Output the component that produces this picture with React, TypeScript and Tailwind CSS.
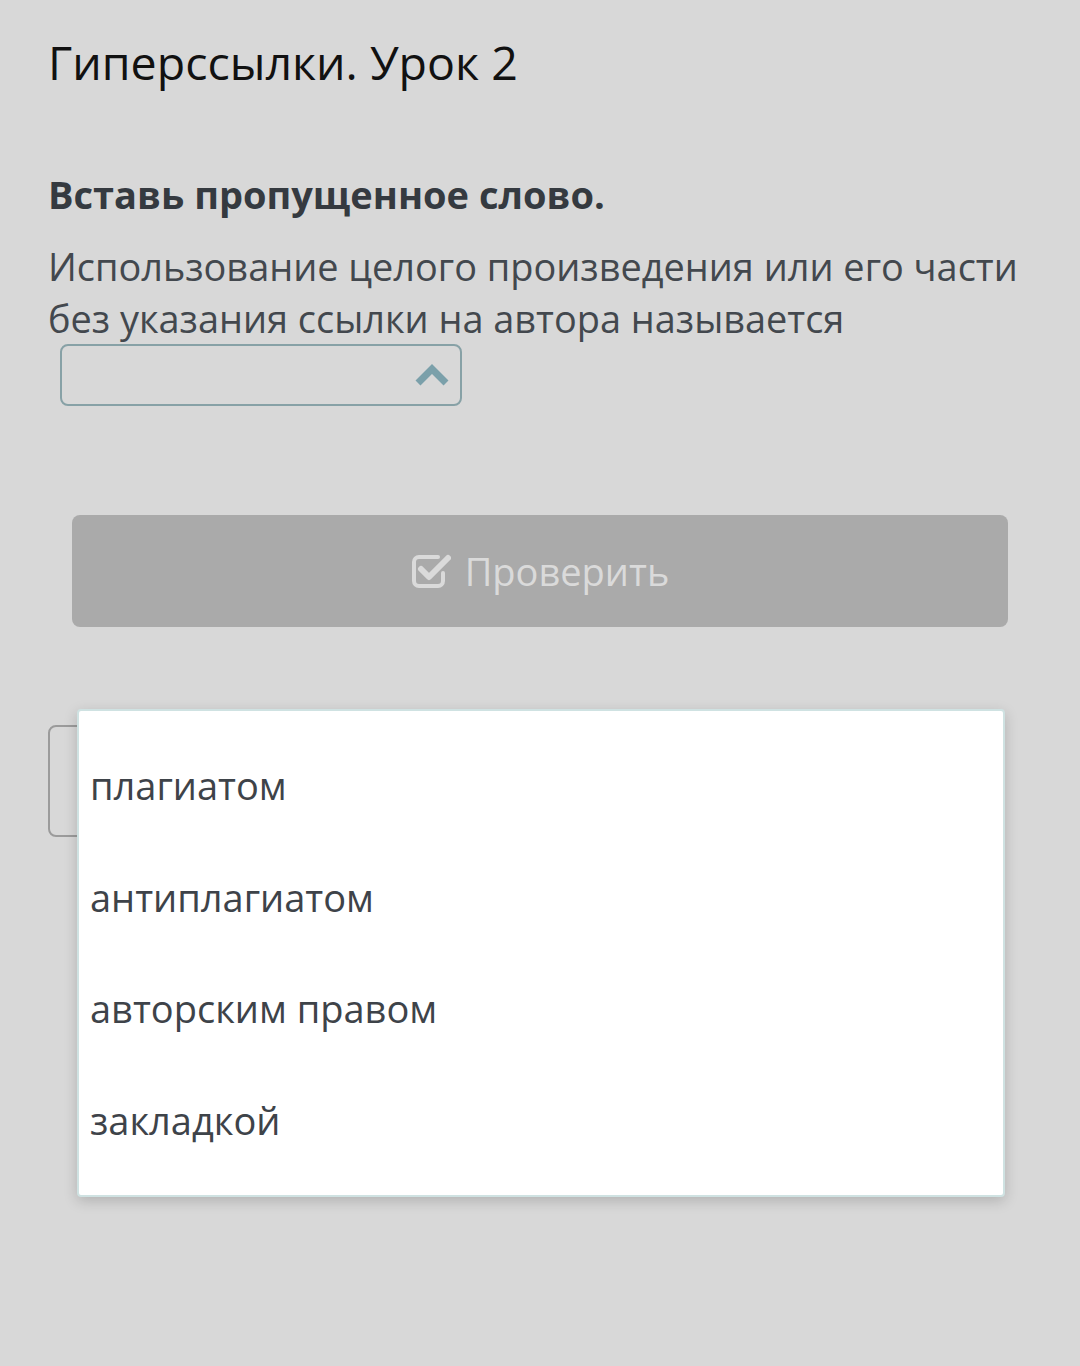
import React from 'react';

const options = ['плагиатом', 'антиплагиатом', 'авторским правом', 'закладкой'];

const CheckIcon = () => (
  <svg width="40" height="36" viewBox="0 0 40 36" fill="none">
    <path
      d="M27 4 H8 a5 5 0 0 0 -5 5 V28 a5 5 0 0 0 5 5 H27 a5 5 0 0 0 5 -5 V20"
      stroke="#dadada"
      strokeWidth="4"
      strokeLinecap="round"
    />
    <path d="M10 16 L18 24 L37 5" stroke="#dadada" strokeWidth="6" strokeLinecap="round" strokeLinejoin="round" />
  </svg>
);

const Chevron = () => (
  <svg width="36" height="28" viewBox="0 0 36 28" fill="none">
    <path d="M4 22 L18 8 L32 22" stroke="#7ba0aa" strokeWidth="7" strokeLinejoin="miter" />
  </svg>
);

export default function App() {
  return (
    <div
      className="relative min-h-[1366px] bg-[#d8d8d8] px-[48px] pt-[27px]"
      style={{ fontFamily: '"Open Sans", "Noto Sans", sans-serif' }}
    >
      <h1 className="text-[46.5px] leading-[70px] text-[#111111] font-normal">Гиперссылки. Урок 2</h1>

      <div className="mt-[72px] text-[38px] leading-[50px] font-bold text-[#353a40]">Вставь пропущенное слово.</div>

      <p className="mt-[21px] text-[37.9px] leading-[52px] text-[#43484e]">
        Использование целого произведения или его части без указания ссылки на автора называется
      </p>

      <div className="ml-[12px] flex h-[62px] w-[402px] items-center justify-end rounded-[8px] border-2 border-[#87a1a6] pr-[10px]">
        <Chevron />
      </div>

      <div className="mx-[24px] mt-[109px] flex h-[112px] items-center justify-center gap-[14px] rounded-[8px] bg-[#aaaaaa]">
        <CheckIcon />
        <span className="text-[38px] text-[#dadada]">Проверить</span>
      </div>

      <div className="mt-[98px] h-[112px] w-[500px] rounded-[8px] border-2 border-[#9b9b9b]" />

      <div className="absolute left-[77px] top-[709px] w-[928px] rounded-[4px] border-2 border-[#cfe2e2] bg-white py-[19px] shadow-[0_4px_14px_rgba(0,0,0,0.18)]">
        {options.map((o) => (
          <div key={o} className="flex h-[111.5px] items-center pl-[11px] text-[38px] text-[#3e4349]">
            {o}
          </div>
        ))}
      </div>
    </div>
  );
}
